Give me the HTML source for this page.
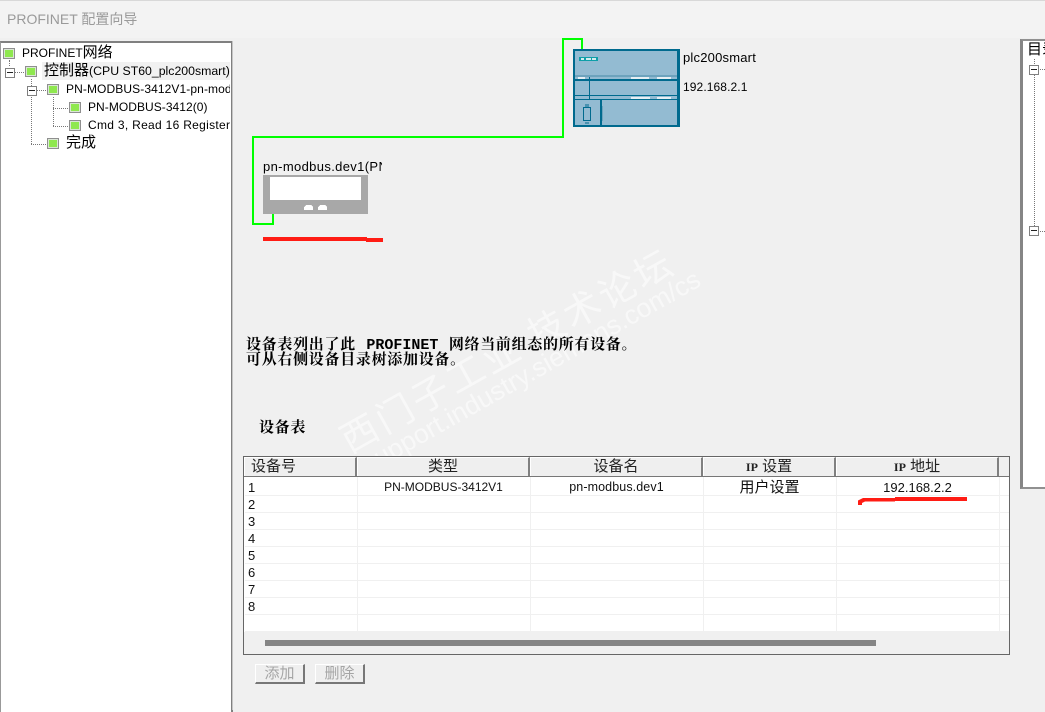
<!DOCTYPE html>
<html><head><meta charset="utf-8"><style>
html,body{margin:0;padding:0}
body{width:1045px;height:710px;overflow:hidden;position:relative;background:#f0f0f0;font-family:"Liberation Sans","Noto Sans CJK SC",sans-serif;color:#000}
.a{position:absolute;white-space:nowrap}
.t{font-size:12px;line-height:18px;letter-spacing:.1px}
.ic{position:absolute;width:10px;height:9px;border:1px solid #8f8f8f;background:#8fe84f;box-shadow:inset 0 0 0 1px #dbe6d6}
.box{position:absolute;width:8px;height:8px;border:1px solid #808080;background:#fff}
.box:after{content:"";position:absolute;left:1px;top:3px;width:6px;height:1px;background:#222}
.v{position:absolute;border-left:1px dotted #777;width:0}
.h{position:absolute;border-top:1px dotted #777;height:0}
.hd{position:absolute;top:457px;height:18px;background:#efefef;border-left:1px solid #fff;border-top:1px solid #fff;border-right:2px solid #808080;border-bottom:1px solid #999;text-align:center;font-size:15px;line-height:18px;font-family:"Liberation Sans","WenQuanYi Zen Hei","Noto Sans CJK SC",sans-serif;color:#222}
.rl{position:absolute;left:245px;width:764px;height:1px;background:#f0f0f0}
.cl{position:absolute;top:477px;height:155px;width:1px;background:#f0f0f0}
.n{position:absolute;left:248px;font-size:13px;line-height:16px;color:#111}
.c{position:absolute;top:479px;text-align:center;font-size:12px;line-height:17px;color:#111}
.btn{position:absolute;top:664px;width:47px;height:17px;background:#efefef;border-left:1px solid #fff;border-top:1px solid #fff;border-right:2px solid #777;border-bottom:2px solid #777;text-align:center;font-size:15px;line-height:18px;color:#a5a5a5}
.bold{font-family:"Liberation Serif","WenQuanYi Zen Hei","Noto Serif CJK SC",serif;font-weight:700;font-size:15px;line-height:15px;letter-spacing:.7px;color:#000}
.bold b{font-family:"Liberation Mono",monospace;letter-spacing:0;font-size:15px;margin:0 6px}
</style></head><body>

<!-- title bar -->
<div class="a" style="left:0;top:0;width:1045px;height:38px;background:#f3f3f3"></div>
<div class="a" style="left:0;top:0;width:1045px;height:1px;background:#d8d8d8"></div>
<div class="a" style="left:7px;top:9px;font-size:14px;line-height:20px;color:#9a9a9a">PROFINET 配置向导</div>

<!-- left tree -->
<div class="a" style="left:0;top:41px;width:230px;height:669px;background:#fff;border-top:2px solid #808080;border-right:2px solid #808080;border-left:1px solid #999"></div>
<div class="a" style="left:232px;top:41px;width:1px;height:669px;background:#c5c5c5"></div>

<div class="ic" style="left:3px;top:48px"></div>
<div class="a t" style="left:22px;top:44px;letter-spacing:0;font-size:12px">PROFINET<span style="font-size:15px">网络</span></div>
<div class="a" style="left:42px;top:62px;width:188px;height:18px;background:#f1f1f1"></div>
<div class="v" style="left:9px;top:60px;height:6px"></div>
<div class="box" style="left:5px;top:68px"></div>
<div class="h" style="left:15px;top:72px;width:9px"></div>
<div class="ic" style="left:25px;top:66px"></div>
<div class="a t" style="left:44px;top:62px;width:186px;overflow:hidden;font-size:12.300px;letter-spacing:0"><span style="font-size:15px">控制器</span>(CPU ST60_plc200smart)</div>
<div class="v" style="left:31px;top:79px;height:65px"></div>
<div class="h" style="left:31px;top:144px;width:15px"></div>
<div class="box" style="left:27px;top:86px"></div>
<div class="h" style="left:37px;top:90px;width:9px"></div>
<div class="ic" style="left:47px;top:84px"></div>
<div class="a t" style="left:66px;top:80px;width:164px;overflow:hidden">PN-MODBUS-3412V1-pn-modbus</div>
<div class="v" style="left:53px;top:97px;height:29px"></div>
<div class="h" style="left:53px;top:108px;width:15px"></div>
<div class="h" style="left:53px;top:126px;width:15px"></div>
<div class="ic" style="left:69px;top:102px"></div>
<div class="a t" style="left:88px;top:98px;letter-spacing:.05px">PN-MODBUS-3412(0)</div>
<div class="ic" style="left:69px;top:120px"></div>
<div class="a t" style="left:88px;top:116px;width:142px;overflow:hidden;letter-spacing:.3px">Cmd 3, Read 16 Registers</div>
<div class="ic" style="left:47px;top:138px"></div>
<div class="a" style="left:66px;top:134px;font-size:15px;line-height:18px">完成</div>

<!-- right tree -->
<div class="a" style="left:1020px;top:39px;width:25px;height:450px;background:#fff;border-left:3px solid #858585;border-top:2px solid #909090;border-bottom:2px solid #909090;box-sizing:border-box"></div>
<div class="a" style="left:1027px;top:40px;width:18px;overflow:hidden;font-size:15px;line-height:20px">目录</div>
<div class="v" style="left:1034px;top:59px;height:175px"></div>
<div class="box" style="left:1029px;top:65px"></div>
<div class="box" style="left:1029px;top:226px"></div>
<div class="h" style="left:1040px;top:69px;width:5px"></div>
<div class="h" style="left:1040px;top:231px;width:5px"></div>

<!-- watermark -->
<div class="a" style="left:342px;top:420px;font-size:37px;line-height:40px;letter-spacing:3.500px;color:#f8f8f8;font-family:'Noto Sans CJK SC',sans-serif;transform:rotate(-29.200deg);transform-origin:0 50%">西门子工业 技术论坛</div>
<div class="a" style="left:364px;top:451px;font-size:26.500px;line-height:30px;color:#f8f8f8;transform:rotate(-29.500deg);transform-origin:0 50%">support.industry.siemens.com/cs</div>

<!-- network graphic -->
<svg class="a" style="left:240px;top:30px" width="460" height="220" viewBox="240 30 460 220" shape-rendering="crispEdges">
<path d="M273 213V224H253V137H563V39H582V50" fill="none" stroke="#0f0" stroke-width="2"/>
<rect x="263" y="175" width="105" height="39" fill="#a8a8a8"/>
<rect x="270" y="177" width="91" height="23" fill="#fff"/>
<path d="M304 210v-3l2-2h5l2 2v3zM318 210v-3l2-2h5l2 2v3z" fill="#fff"/>
<rect x="263" y="237" width="104" height="4" fill="#ff1c14"/>
<rect x="366" y="238" width="17" height="4" fill="#ff1c14"/>
<rect x="573" y="49" width="107" height="78" fill="#006a8e"/>
<rect x="575" y="51" width="102" height="24" fill="#93bbd2"/>
<rect x="575" y="75" width="102" height="2" fill="#6da3bd"/>
<rect x="575" y="77" width="102" height="2" fill="#93bbd2"/>
<rect x="575" y="81" width="102" height="14" fill="#93bbd2"/>
<rect x="575" y="96" width="102" height="3" fill="#93bbd2"/>
<rect x="575" y="100" width="25" height="25" fill="#93bbd2"/>
<rect x="602" y="100" width="75" height="25" fill="#93bbd2"/>
<rect x="589" y="77" width="1" height="22" fill="#006a8e"/>
<rect x="579" y="57" width="19" height="4" fill="#0e9fa8"/>
<g fill="#d5ecee"><rect x="581" y="58" width="3" height="2"/><rect x="586" y="58" width="5" height="2"/><rect x="592" y="58" width="4" height="2"/></g>
<g fill="#e6eff4"><rect x="578" y="77" width="7" height="2"/><rect x="631" y="77" width="18" height="2"/><rect x="657" y="77" width="14" height="2"/><rect x="631" y="97" width="19" height="2"/><rect x="657" y="97" width="14" height="2"/></g>
<g fill="none" stroke="#006a8e"><path d="M586 104v3M588 104v3M583.500 107.500h7v13h-7zM585 123h4"/></g>
<rect x="602" y="106" width="1" height="15" fill="#6da3bd"/>
</svg>
<div class="a" style="left:263px;top:158px;width:119px;overflow:hidden;font-size:13px;line-height:17px;letter-spacing:.35px">pn-modbus.dev1(PN-MODBUS</div>
<div class="a" style="left:683px;top:49px;font-size:13px;line-height:17px;letter-spacing:.2px">plc200smart</div>
<div class="a" style="left:683px;top:79px;font-size:12px;line-height:17px;letter-spacing:.1px">192.168.2.1</div>

<!-- text -->
<div class="a bold" style="left:246px;top:338px">设备表列出了此 <b>PROFINET</b> 网络当前组态的所有设备。<br>可从右侧设备目录树添加设备。</div>
<div class="a bold" style="left:259px;top:421px">设备表</div>

<!-- table -->
<div class="a" style="left:243px;top:456px;width:765px;height:197px;background:#f0f0f0;border:1px solid #666"></div>
<div class="a" style="left:244px;top:477px;width:765px;height:155px;background:#fff"></div>
<div class="hd" style="left:244px;width:104px;text-align:left;padding-left:6px">设备号</div>
<div class="hd" style="left:357px;width:170px">类型</div>
<div class="hd" style="left:530px;width:170px">设备名</div>
<div class="hd" style="left:703px;width:130px"><span style="font-family:'Liberation Serif',serif;font-size:12px;font-weight:700">IP</span> 设置</div>
<div class="hd" style="left:836px;width:160px"><span style="font-family:'Liberation Serif',serif;font-size:12px;font-weight:700">IP</span> 地址</div>
<div class="a" style="left:244px;top:476px;width:765px;height:1px;background:#777"></div>

<div class="rl" style="top:495px"></div><div class="rl" style="top:512px"></div><div class="rl" style="top:529px"></div><div class="rl" style="top:546px"></div><div class="rl" style="top:563px"></div><div class="rl" style="top:580px"></div><div class="rl" style="top:597px"></div><div class="rl" style="top:614px"></div><div class="rl" style="top:631px"></div>
<div class="cl" style="left:357px"></div><div class="cl" style="left:530px"></div><div class="cl" style="left:703px"></div><div class="cl" style="left:836px"></div><div class="cl" style="left:999px"></div>

<div class="n" style="top:480px">1</div><div class="n" style="top:497px">2</div><div class="n" style="top:514px">3</div><div class="n" style="top:531px">4</div><div class="n" style="top:548px">5</div><div class="n" style="top:565px">6</div><div class="n" style="top:582px">7</div><div class="n" style="top:599px">8</div>
<div class="c" style="left:357px;width:173px">PN-MODBUS-3412V1</div>
<div class="c" style="left:530px;width:173px;font-size:12.500px;letter-spacing:.1px">pn-modbus.dev1</div>
<div class="c" style="left:703px;width:133px;font-size:15px">用户设置</div>
<div class="c" style="left:836px;width:163px;font-size:13px">192.168.2.2</div>

<svg class="a" style="left:855px;top:495px" width="115" height="12" viewBox="855 495 115 12">
<path d="M858 505V500.500L863 498H895V497H967V501H895V501.500H865L862 503V505Z" fill="#ff1c14"/>
</svg>

<div class="a" style="left:265px;top:640px;width:611px;height:6px;background:#858585"></div>

<div class="btn" style="left:255px">添加</div>
<div class="btn" style="left:315px">删除</div>

</body></html>
